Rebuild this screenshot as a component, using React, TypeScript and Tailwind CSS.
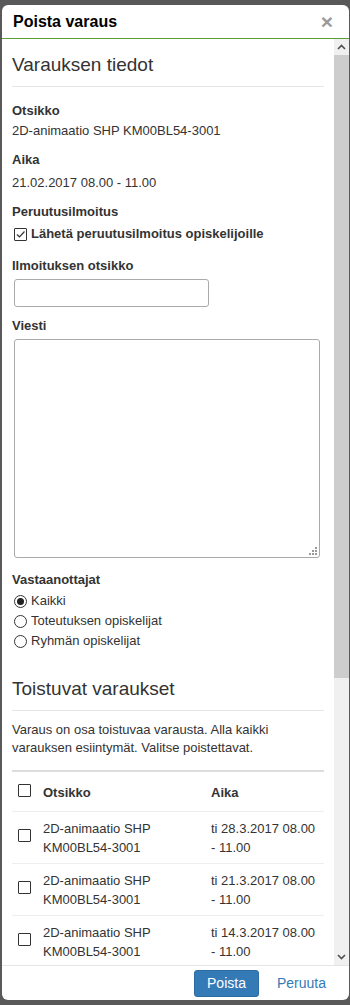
import React from "react"

const rows = [
  { title: "2D-animaatio SHP KM00BL54-3001", time: "ti 28.3.2017 08.00 - 11.00" },
  { title: "2D-animaatio SHP KM00BL54-3001", time: "ti 21.3.2017 08.00 - 11.00" },
  { title: "2D-animaatio SHP KM00BL54-3001", time: "ti 14.3.2017 08.00 - 11.00" },
]

function Box({ checked = false }: { checked?: boolean }) {
  return (
    <span className="inline-flex h-[13px] w-[13px] shrink-0 items-center justify-center rounded-[1px] border border-[#333] bg-white">
      {checked && (
        <svg width="11" height="11" viewBox="0 0 11 11">
          <path d="M2 5.5 L4.5 8 L9.5 2.5" fill="none" stroke="#333" strokeWidth="1.2" />
        </svg>
      )}
    </span>
  )
}

function Radio({ checked = false, label }: { checked?: boolean; label: string }) {
  return (
    <label className="flex h-[20px] items-center gap-[4px]">
      <span className="flex h-[13px] w-[13px] shrink-0 items-center justify-center rounded-full border border-[#333] bg-white">
        {checked && <span className="h-[7px] w-[7px] rounded-full bg-[#222]" />}
      </span>
      <span>{label}</span>
    </label>
  )
}

export default function App() {
  return (
    <div
      className="h-[1005px] w-[350px] overflow-hidden bg-[#595959] pl-[2px] pt-[5px] text-[13px] text-[#333]"
      style={{ fontFamily: '"Liberation Sans", Arial, sans-serif' }}
    >
      <div className="flex h-[995px] w-[347px] flex-col overflow-hidden rounded-[6px] bg-white">
        {/* header */}
        <div className="flex h-[34px] shrink-0 items-center justify-between border-b border-[#5c9e31] pl-[11px] pr-[16px]">
          <h2 className="text-[16px] font-bold text-black">Poista varaus</h2>
          <span className="text-[21px] font-bold leading-none text-[#9a9a9a]">×</span>
        </div>

        {/* body */}
        <div className="flex min-h-0 flex-1">
          <div className="min-w-0 flex-1 overflow-hidden px-[10px]">
            <h3 className="pt-[14px] text-[19px] leading-[24px]">Varauksen tiedot</h3>
            <div className="mt-[9px] h-px bg-[#e5e5e5]" />

            <div className="mt-[15px] font-bold leading-[18px]">Otsikko</div>
            <div className="mt-[2px] leading-[18px]">2D-animaatio SHP KM00BL54-3001</div>
            <div className="mt-[11px] font-bold leading-[18px]">Aika</div>
            <div className="mt-[5px] leading-[18px]">21.02.2017 08.00 - 11.00</div>

            <div className="mt-[11px] font-bold leading-[18px]">Peruutusilmoitus</div>
            <label className="mt-[4px] ml-[2px] flex items-center gap-[4px] font-bold leading-[18px]">
              <Box checked />
              <span>Lähetä peruutusilmoitus opiskelijoille</span>
            </label>

            <div className="mt-[14px] font-bold leading-[18px]">Ilmoituksen otsikko</div>
            <div className="mt-[4px] ml-[2px] h-[28px] w-[195px] rounded-[3px] border border-[#aaa]" />

            <div className="mt-[10px] font-bold leading-[18px]">Viesti</div>
            <div className="relative mt-[4px] ml-[2px] h-[219px] w-[306px] rounded-[3px] border border-[#aaa]">
              <svg className="absolute bottom-[2px] right-[2px]" width="8" height="8" viewBox="0 0 8 8">
                <rect x="6" y="0" width="2" height="2" fill="#999" />
                <rect x="3" y="3" width="2" height="2" fill="#999" />
                <rect x="6" y="3" width="2" height="2" fill="#999" />
                <rect x="0" y="6" width="2" height="2" fill="#999" />
                <rect x="3" y="6" width="2" height="2" fill="#999" />
                <rect x="6" y="6" width="2" height="2" fill="#999" />
              </svg>
            </div>

            <div className="mt-[13px] font-bold leading-[18px]">Vastaanottajat</div>
            <div className="mt-[2px] ml-[2px]">
              <Radio checked label="Kaikki" />
              <Radio label="Toteutuksen opiskelijat" />
              <Radio label="Ryhmän opiskelijat" />
            </div>

            <h3 className="mt-[26px] text-[19px] leading-[24px]">Toistuvat varaukset</h3>
            <div className="mt-[9px] h-px bg-[#e5e5e5]" />
            <p className="mt-[10px] leading-[18px]">
              Varaus on osa toistuvaa varausta. Alla kaikki varauksen esiintymät. Valitse poistettavat.
            </p>

            <div className="mt-[13px] border-t-2 border-[#ddd]">
              <div className="flex h-[40px] items-center border-b border-[#eee] pt-[3px] font-bold">
                <div className="w-[31px] pl-[6px]">
                  <Box />
                </div>
                <div className="w-[168px]">Otsikko</div>
                <div className="flex-1">Aika</div>
              </div>
              {rows.map((r, i) => (
                <div key={i} className="flex h-[52px] items-center border-b border-[#eee] leading-[19px]">
                  <div className="w-[31px] pl-[6px]">
                    <Box />
                  </div>
                  <div className="w-[168px] pr-[40px]">{r.title}</div>
                  <div className="w-[112px]">{r.time}</div>
                </div>
              ))}
            </div>
          </div>

          {/* scrollbar */}
          <div className="flex w-[15px] shrink-0 flex-col bg-[#f0f0f0]">
            <div className="flex h-[16px] items-center justify-center">
              <svg width="9" height="6" viewBox="0 0 9 6">
                <path d="M1 5 L4.5 1.5 L8 5" fill="none" stroke="#505050" strokeWidth="1.6" />
              </svg>
            </div>
            <div className="h-[623px] bg-[#cdcdcd]" />
            <div className="flex-1" />
            <div className="flex h-[16px] items-center justify-center">
              <svg width="9" height="6" viewBox="0 0 9 6">
                <path d="M1 1 L4.5 4.5 L8 1" fill="none" stroke="#505050" strokeWidth="1.6" />
              </svg>
            </div>
          </div>
        </div>

        {/* footer */}
        <div className="flex h-[35px] shrink-0 items-center justify-end gap-[18px] border-t border-[#e5e5e5] pr-[23px]">
          <button className="h-[27px] rounded-[3px] border border-[#2e6da4] bg-[#337ab7] px-[12px] text-[14px] leading-[25px] text-white">
            Poista
          </button>
          <span className="text-[14px] leading-[20px] text-[#337ab7]">Peruuta</span>
        </div>
      </div>
    </div>
  )
}
